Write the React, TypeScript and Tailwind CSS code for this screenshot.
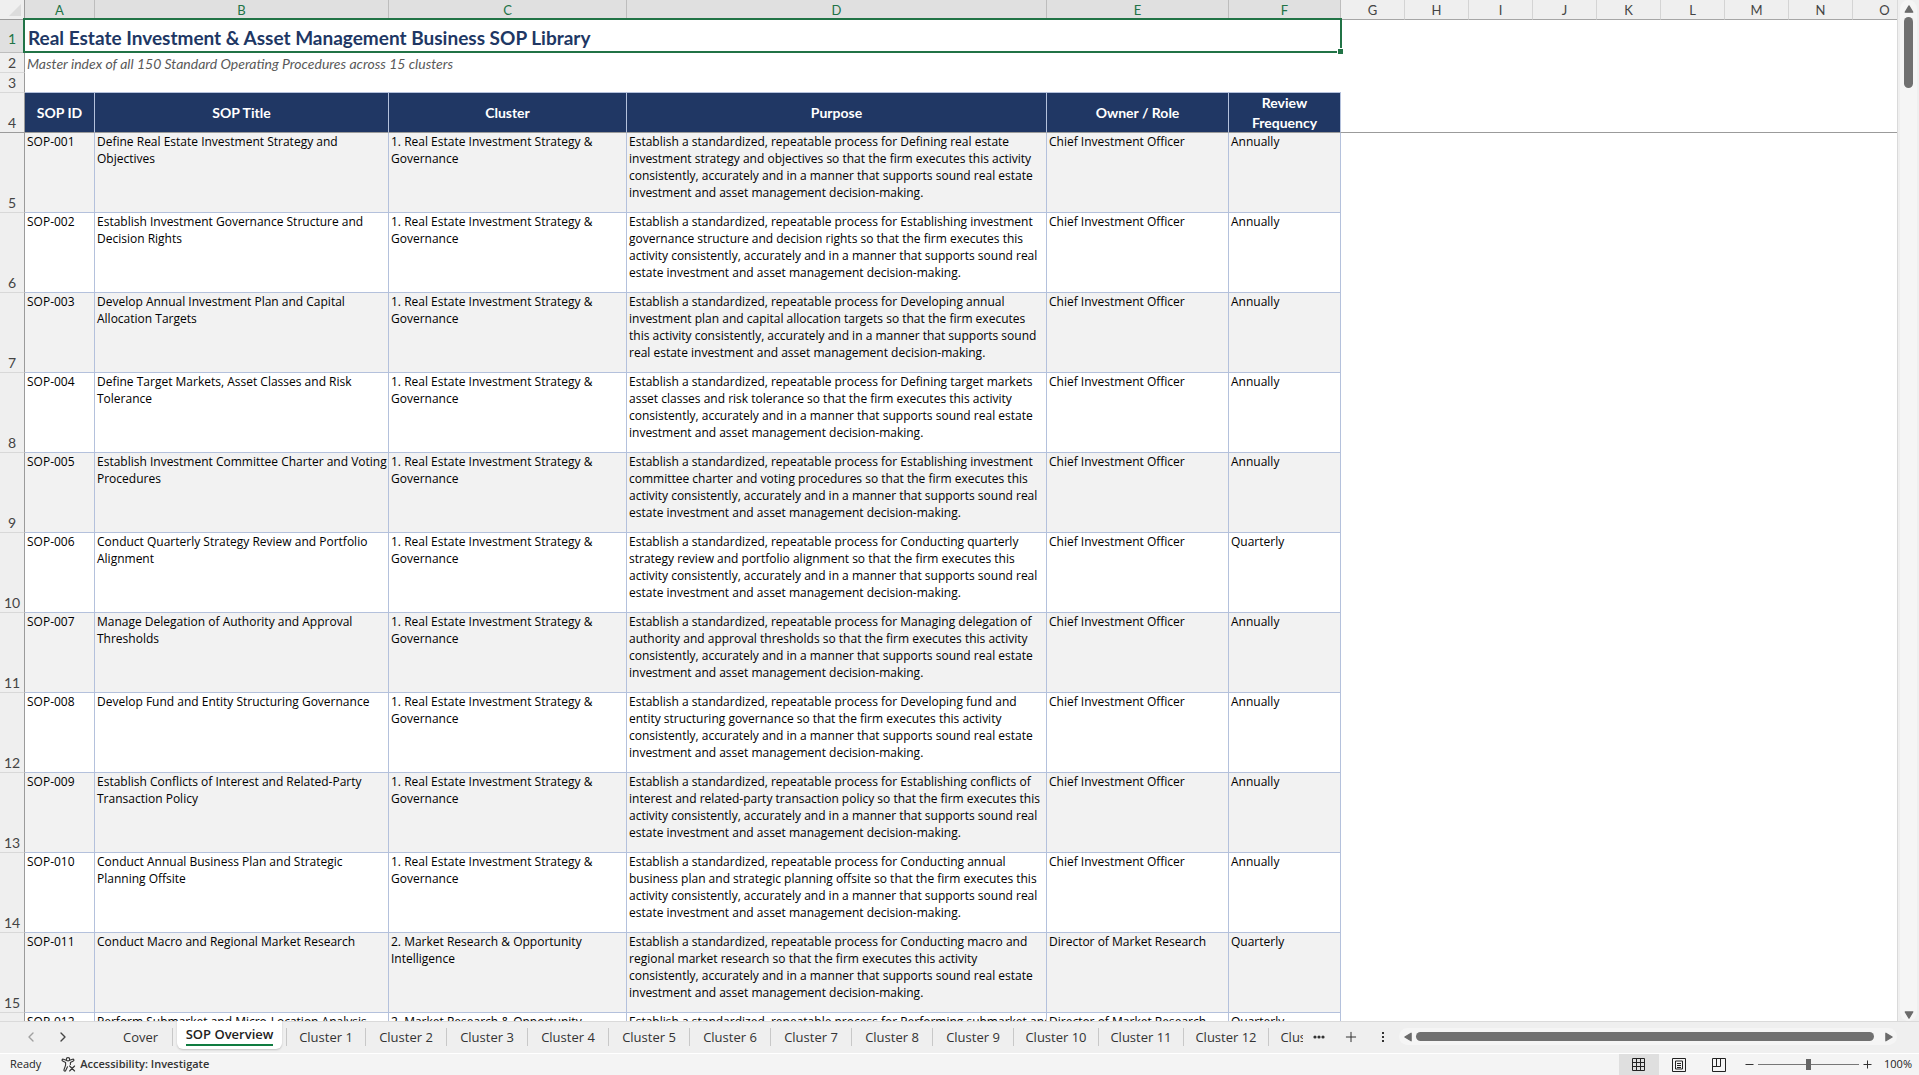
import { useState } from "react";
import type { ReactNode } from "react";
import { ChevronLeft, ChevronRight, Plus } from "lucide-react";

interface Sop {
	id: string;
	title: string;
	cluster: string;
	purpose: string;
	owner: string;
	review: string;
}

const STRATEGY = "1. Real Estate Investment Strategy &\nGovernance";
const CIO = "Chief Investment Officer";
const DMR = "Director of Market Research";

// Line breaks are kept in the cell text (Alt+Enter style)
const SOPS: Sop[] = [
	{
		id: "SOP-001",
		title: "Define Real Estate Investment Strategy and\nObjectives",
		cluster: STRATEGY,
		purpose:
			"Establish a standardized, repeatable process for Defining real estate\ninvestment strategy and objectives so that the firm executes this activity\nconsistently, accurately and in a manner that supports sound real estate\ninvestment and asset management decision-making.",
		owner: CIO,
		review: "Annually",
	},
	{
		id: "SOP-002",
		title: "Establish Investment Governance Structure and\nDecision Rights",
		cluster: STRATEGY,
		purpose:
			"Establish a standardized, repeatable process for Establishing investment\ngovernance structure and decision rights so that the firm executes this\nactivity consistently, accurately and in a manner that supports sound real\nestate investment and asset management decision-making.",
		owner: CIO,
		review: "Annually",
	},
	{
		id: "SOP-003",
		title: "Develop Annual Investment Plan and Capital\nAllocation Targets",
		cluster: STRATEGY,
		purpose:
			"Establish a standardized, repeatable process for Developing annual\ninvestment plan and capital allocation targets so that the firm executes\nthis activity consistently, accurately and in a manner that supports sound\nreal estate investment and asset management decision-making.",
		owner: CIO,
		review: "Annually",
	},
	{
		id: "SOP-004",
		title: "Define Target Markets, Asset Classes and Risk\nTolerance",
		cluster: STRATEGY,
		purpose:
			"Establish a standardized, repeatable process for Defining target markets\nasset classes and risk tolerance so that the firm executes this activity\nconsistently, accurately and in a manner that supports sound real estate\ninvestment and asset management decision-making.",
		owner: CIO,
		review: "Annually",
	},
	{
		id: "SOP-005",
		title: "Establish Investment Committee Charter and Voting\nProcedures",
		cluster: STRATEGY,
		purpose:
			"Establish a standardized, repeatable process for Establishing investment\ncommittee charter and voting procedures so that the firm executes this\nactivity consistently, accurately and in a manner that supports sound real\nestate investment and asset management decision-making.",
		owner: CIO,
		review: "Annually",
	},
	{
		id: "SOP-006",
		title: "Conduct Quarterly Strategy Review and Portfolio\nAlignment",
		cluster: STRATEGY,
		purpose:
			"Establish a standardized, repeatable process for Conducting quarterly\nstrategy review and portfolio alignment so that the firm executes this\nactivity consistently, accurately and in a manner that supports sound real\nestate investment and asset management decision-making.",
		owner: CIO,
		review: "Quarterly",
	},
	{
		id: "SOP-007",
		title: "Manage Delegation of Authority and Approval\nThresholds",
		cluster: STRATEGY,
		purpose:
			"Establish a standardized, repeatable process for Managing delegation of\nauthority and approval thresholds so that the firm executes this activity\nconsistently, accurately and in a manner that supports sound real estate\ninvestment and asset management decision-making.",
		owner: CIO,
		review: "Annually",
	},
	{
		id: "SOP-008",
		title: "Develop Fund and Entity Structuring Governance",
		cluster: STRATEGY,
		purpose:
			"Establish a standardized, repeatable process for Developing fund and\nentity structuring governance so that the firm executes this activity\nconsistently, accurately and in a manner that supports sound real estate\ninvestment and asset management decision-making.",
		owner: CIO,
		review: "Annually",
	},
	{
		id: "SOP-009",
		title: "Establish Conflicts of Interest and Related-Party\nTransaction Policy",
		cluster: STRATEGY,
		purpose:
			"Establish a standardized, repeatable process for Establishing conflicts of\ninterest and related-party transaction policy so that the firm executes this\nactivity consistently, accurately and in a manner that supports sound real\nestate investment and asset management decision-making.",
		owner: CIO,
		review: "Annually",
	},
	{
		id: "SOP-010",
		title: "Conduct Annual Business Plan and Strategic\nPlanning Offsite",
		cluster: STRATEGY,
		purpose:
			"Establish a standardized, repeatable process for Conducting annual\nbusiness plan and strategic planning offsite so that the firm executes this\nactivity consistently, accurately and in a manner that supports sound real\nestate investment and asset management decision-making.",
		owner: CIO,
		review: "Annually",
	},
	{
		id: "SOP-011",
		title: "Conduct Macro and Regional Market Research",
		cluster: "2. Market Research & Opportunity\nIntelligence",
		purpose:
			"Establish a standardized, repeatable process for Conducting macro and\nregional market research so that the firm executes this activity\nconsistently, accurately and in a manner that supports sound real estate\ninvestment and asset management decision-making.",
		owner: DMR,
		review: "Quarterly",
	},
	{
		id: "SOP-012",
		title: "Perform Submarket and Micro-Location Analysis",
		cluster: "2. Market Research & Opportunity",
		purpose: "Establish a standardized, repeatable process for Performing submarket and",
		owner: DMR,
		review: "Quarterly",
	},
];

const COLUMNS = [
	{ letter: "A", width: "w-[70px]", heading: "SOP ID" },
	{ letter: "B", width: "w-[294px]", heading: "SOP Title" },
	{ letter: "C", width: "w-[238px]", heading: "Cluster" },
	{ letter: "D", width: "w-[420px]", heading: "Purpose" },
	{ letter: "E", width: "w-[182px]", heading: "Owner / Role" },
	{ letter: "F", width: "w-[112px]", heading: "Review\nFrequency" },
];
const EMPTY_COLUMNS = ["G", "H", "I", "J", "K", "L", "M", "N", "O"];

const SHEETS = [
	"Cover",
	"SOP Overview",
	...Array.from({ length: 15 }, (_, i) => `Cluster ${i + 1}`),
];

function RowNumber({ n, className = "border-[#d8d8d8] text-[#444]" }: { n: number; className?: string }) {
	return (
		<th
			scope="row"
			className={`border-b border-r border-r-[#9b9b9b] p-0 text-center align-bottom text-sm/[18px] font-normal ${className}`}
		>
			{n}
		</th>
	);
}

function Sheet() {
	return (
		<div className="min-w-0 flex-1 overflow-hidden border-r border-[#dadada] bg-white">
			<table className="w-[1917px] table-fixed border-separate border-spacing-0 font-['Lato',sans-serif]">
				<colgroup>
					<col className="w-[25px]" />
					{COLUMNS.map((c) => (
						<col key={c.letter} className={c.width} />
					))}
					{EMPTY_COLUMNS.map((c) => (
						<col key={c} className="w-16" />
					))}
				</colgroup>
				<thead>
					<tr className="h-5">
						<td className="border-b border-r border-[#9b9b9b] bg-[#efefef] p-0">
							<svg className="ml-[9px] h-[12px] w-[12px]" viewBox="0 0 12 12">
								<path d="M12 0v12H0z" fill="#dcdcdc" />
							</svg>
						</td>
						{COLUMNS.map((c) => (
							<th
								key={c.letter}
								scope="col"
								className="h-5 border-b border-r border-b-[#9b9b9b] border-r-[#bdbdbd] bg-[#e0e0e0] p-0 pt-0.5 text-[13px]/[17px] font-normal text-[#217346]"
							>
								{c.letter}
							</th>
						))}
						{EMPTY_COLUMNS.map((c) => (
							<th
								key={c}
								scope="col"
								className="h-5 border-b border-r border-b-[#a6a6a6] border-r-[#d4d4d4] bg-[#efefef] p-0 pt-0.5 text-[13px]/[17px] font-normal text-[#444]"
							>
								{c}
							</th>
						))}
					</tr>
				</thead>
				<tbody className="bg-[#efefef]">
					<tr className="h-[33px]">
						<RowNumber n={1} className="border-[#bdbdbd] bg-[#e0e0e0] pb-1 text-[#217346]" />
						<td
							colSpan={6}
							className="relative bg-white px-[3px] pt-0 pb-[3px] align-bottom text-[19px]/6 font-bold text-[#203764]"
						>
							Real Estate Investment &amp; Asset Management Business SOP Library
							{/* Selection frame and fill handle */}
							<div className="pointer-events-none absolute -top-0.5 -right-px bottom-0 -left-0.5 border-2 border-[#217346]" />
							<div className="absolute -right-[3px] -bottom-[2px] size-[7px] border border-white bg-[#217346]" />
						</td>
						<td colSpan={9} className="bg-white" />
					</tr>
					<tr className="h-5">
						<RowNumber n={2} />
						<td colSpan={15} className="bg-white px-0.5 py-0 text-sm/[19px] text-[#595959] italic">
							Master index of all 150 Standard Operating Procedures across 15 clusters
						</td>
					</tr>
					<tr className="h-5">
						<RowNumber n={3} />
						<td colSpan={6} className="border-b border-[#b4c1dc] bg-white p-0" />
						<td colSpan={9} className="bg-white p-0" />
					</tr>
					<tr className="h-10">
						<RowNumber n={4} className="border-[#9b9b9b] text-[#444]" />
						{COLUMNS.map((c) => (
							<th
								key={c.letter}
								scope="col"
								className="border-r border-b border-r-[#b4c1dc] border-b-[#9b9b9b] bg-[#203764] p-0 text-sm/5 font-bold whitespace-pre text-white"
							>
								<div className="h-[39px] content-center">{c.heading}</div>
							</th>
						))}
						<td colSpan={9} className="border-b border-[#9b9b9b] bg-white p-0" />
					</tr>
					{SOPS.map((sop, i) => (
						<tr key={sop.id} className="h-20">
							<RowNumber n={i + 5} />
							{[sop.id, sop.title, sop.cluster, sop.purpose, sop.owner, sop.review].map((text, j) => (
								<td
									key={j}
									className={`overflow-hidden border-r border-b border-[#b4c1dc] px-0.5 py-0 align-top font-['Open_Sans',sans-serif] text-xs/[17px] whitespace-pre text-black ${
										i % 2 === 0 ? "bg-[#f2f2f2]" : "bg-white"
									}`}
								>
									{text}
								</td>
							))}
							<td colSpan={9} className="bg-white" />
						</tr>
					))}
				</tbody>
			</table>
		</div>
	);
}

function Arrow({ d, label, className }: { d: string; label: string; className: string }) {
	return (
		<button aria-label={label} className={`flex shrink-0 items-center justify-center ${className}`}>
			<svg className="size-[10px]" viewBox="0 0 8 8">
				<path d={d} fill="#6b6b6b" stroke="#6b6b6b" strokeLinejoin="round" />
			</svg>
		</button>
	);
}

function SheetTabs() {
	const [active, setActive] = useState("SOP Overview");

	return (
		<div className="flex h-8 shrink-0 bg-[#efefef] pr-[22px] text-[13px] text-[#333] shadow-[inset_0_1px_0_#dadada]">
			<div className="flex shrink-0 pr-7 pl-[15px]">
				<button aria-label="Previous sheets" className="flex w-8 items-center justify-center">
					<ChevronLeft className="size-4 text-[#a0a0a0]" strokeWidth={2} />
				</button>
				<button aria-label="Next sheets" className="flex w-8 items-center justify-center">
					<ChevronRight className="size-4 text-[#444]" strokeWidth={2} />
				</button>
			</div>
			<div role="tablist" className="flex min-w-0 flex-1 overflow-hidden">
				{SHEETS.map((name, i) =>
					name === active ? (
						<button
							key={name}
							role="tab"
							aria-selected="true"
							className="mx-1 h-7 w-[105px] shrink-0 rounded-b-md bg-white font-semibold text-[#222] shadow-[0_1px_2px_#00000030]"
						>
							<span className="inline-block border-b-2 border-[#107c41] leading-5">{name}</span>
						</button>
					) : (
						<button
							key={name}
							role="tab"
							aria-selected="false"
							onClick={() => setActive(name)}
							className={`mt-[7px] h-[18px] shrink-0 border-r border-[#c8c8c8] leading-[18px] whitespace-nowrap ${
								i === 0 ? "w-[66px] pl-0.5" : i === 2 ? "w-20 border-l" : i > 10 ? "w-[85px]" : "w-[81px]"
							}`}
						>
							{name}
						</button>
					),
				)}
			</div>
			<button aria-label="More sheets" className="flex w-8 items-center justify-center">
				<svg className="h-1 w-3" viewBox="0 0 12 4" fill="#333">
					<circle cx="2" cy="2" r="1.6" />
					<circle cx="6" cy="2" r="1.6" />
					<circle cx="10" cy="2" r="1.6" />
				</svg>
			</button>
			<button aria-label="New sheet" className="flex w-8 items-center justify-center">
				<Plus className="size-4 text-[#333]" strokeWidth={1.5} />
			</button>
			<div className="flex w-8 items-center justify-center">
				<svg className="h-3 w-1" viewBox="0 0 4 12" fill="#333">
					<path d="M1 1h2v2H1zM1 5h2v2H1zM1 9h2v2H1z" />
				</svg>
			</div>
			<div className="mt-[7px] flex h-[17px] w-[498px] shrink-0 items-center rounded-full bg-[#f5f5f5]">
				<Arrow label="Scroll left" d="M6.5 1v6L1.5 4z" className="w-[17px]" />
				<div className="h-[9px] flex-1 rounded-full bg-[#707070]" />
				<Arrow label="Scroll right" d="M1.5 1v6l5-3z" className="ml-1.5 w-[17px]" />
			</div>
		</div>
	);
}

function ViewButton({ label, selected, children }: { label: string; selected?: boolean; children: ReactNode }) {
	return (
		<button
			aria-label={label}
			className={`flex h-full w-10 items-center justify-center ${selected ? "bg-[#dfdfdf]" : ""}`}
		>
			<svg className="size-[14px]" viewBox="0 0 14 14" fill="none" stroke="#222" strokeWidth="1">
				{children}
			</svg>
		</button>
	);
}

function StatusBar() {
	const [zoom, setZoom] = useState(100);

	return (
		<div className="flex h-[22px] shrink-0 items-center border-t border-white bg-[#f4f4f4] pr-[7px] pl-[10px] text-[11px] text-[#222]">
			<span>Ready</span>
			<button className="ml-5 flex items-center gap-1 font-semibold text-[#333]">
				<svg
					className="size-[15px]"
					viewBox="0 0 15 15"
					fill="none"
					stroke="#333"
					strokeWidth="1.1"
					strokeLinecap="round"
					strokeLinejoin="round"
				>
					<circle cx="7" cy="2.3" r="1.7" />
					<path d="M5.3 3.3 2.4 2.2C1.2 1.8.5 3.4 1.7 4l2.9 1.4v2.7L3 12.8c-.4 1.3 1.2 1.8 1.7.7l1.8-3.7" />
					<path d="m8.7 3.3 2.9-1.1c1.2-.4 1.9 1.2.7 1.8L9.4 5.4v2" />
					<path d="m8.6 9 5 5M13.6 9l-5 5" />
				</svg>
				Accessibility: Investigate
			</button>
			<div className="ml-auto flex h-full items-center">
				<ViewButton label="Normal" selected>
					<path d="M.5.5h12v12H.5zM4.500.5v12M8.500.5v12M.5 4.500h12M.5 8.500h12" />
				</ViewButton>
				<ViewButton label="Page Layout">
					<path d="M.5.5h13v13H.5zM3.500 3h7v8h-7zM5 5.500h4M5 7.500h4M5 9.500h4" />
				</ViewButton>
				<ViewButton label="Page Break Preview">
					<path d="M.5.5h13v13H.5zM.5 8.500h8v-8M4.500.5v8" />
				</ViewButton>
				<button aria-label="Zoom out" className="ml-1.5 flex w-[9px] justify-center">
					<svg className="size-[9px]" viewBox="0 0 9 9" stroke="#333">
						<path d="M.5 4.500h8" />
					</svg>
				</button>
				<input
					type="range"
					aria-label="Zoom"
					min={10}
					max={190}
					value={zoom}
					onChange={(e) => setZoom(Number(e.target.value))}
					className="mx-1 h-[11px] w-[101px] appearance-none bg-[linear-gradient(#777,#777)] bg-[length:100%_1px] bg-center bg-no-repeat [&::-webkit-slider-thumb]:h-[11px] [&::-webkit-slider-thumb]:w-[5px] [&::-webkit-slider-thumb]:appearance-none [&::-webkit-slider-thumb]:bg-[#666]"
				/>
				<button aria-label="Zoom in" className="flex w-[9px] justify-center">
					<svg className="size-[9px]" viewBox="0 0 9 9" stroke="#333">
						<path d="M.5 4.500h8M4.500.5v8" />
					</svg>
				</button>
				<span className="ml-3 w-7 text-right">{zoom}%</span>
			</div>
		</div>
	);
}

export default function App() {
	return (
		<div className="flex h-screen flex-col overflow-hidden bg-[#efefef] font-['Open_Sans',sans-serif]">
			<div className="flex min-h-0 flex-1">
				<Sheet />
				<div className="mr-0.5 ml-0.5 flex w-[17px] shrink-0 flex-col items-center rounded-full bg-[#f5f5f5]">
					<Arrow label="Scroll up" d="M4 1.500 7 6.500H1z" className="h-[17px]" />
					<div className="h-[71px] w-[9px] rounded-full bg-[#707070]" />
					<Arrow label="Scroll down" d="M4 6.500 7 1.500H1z" className="mt-auto h-3" />
				</div>
			</div>
			<SheetTabs />
			<StatusBar />
		</div>
	);
}
